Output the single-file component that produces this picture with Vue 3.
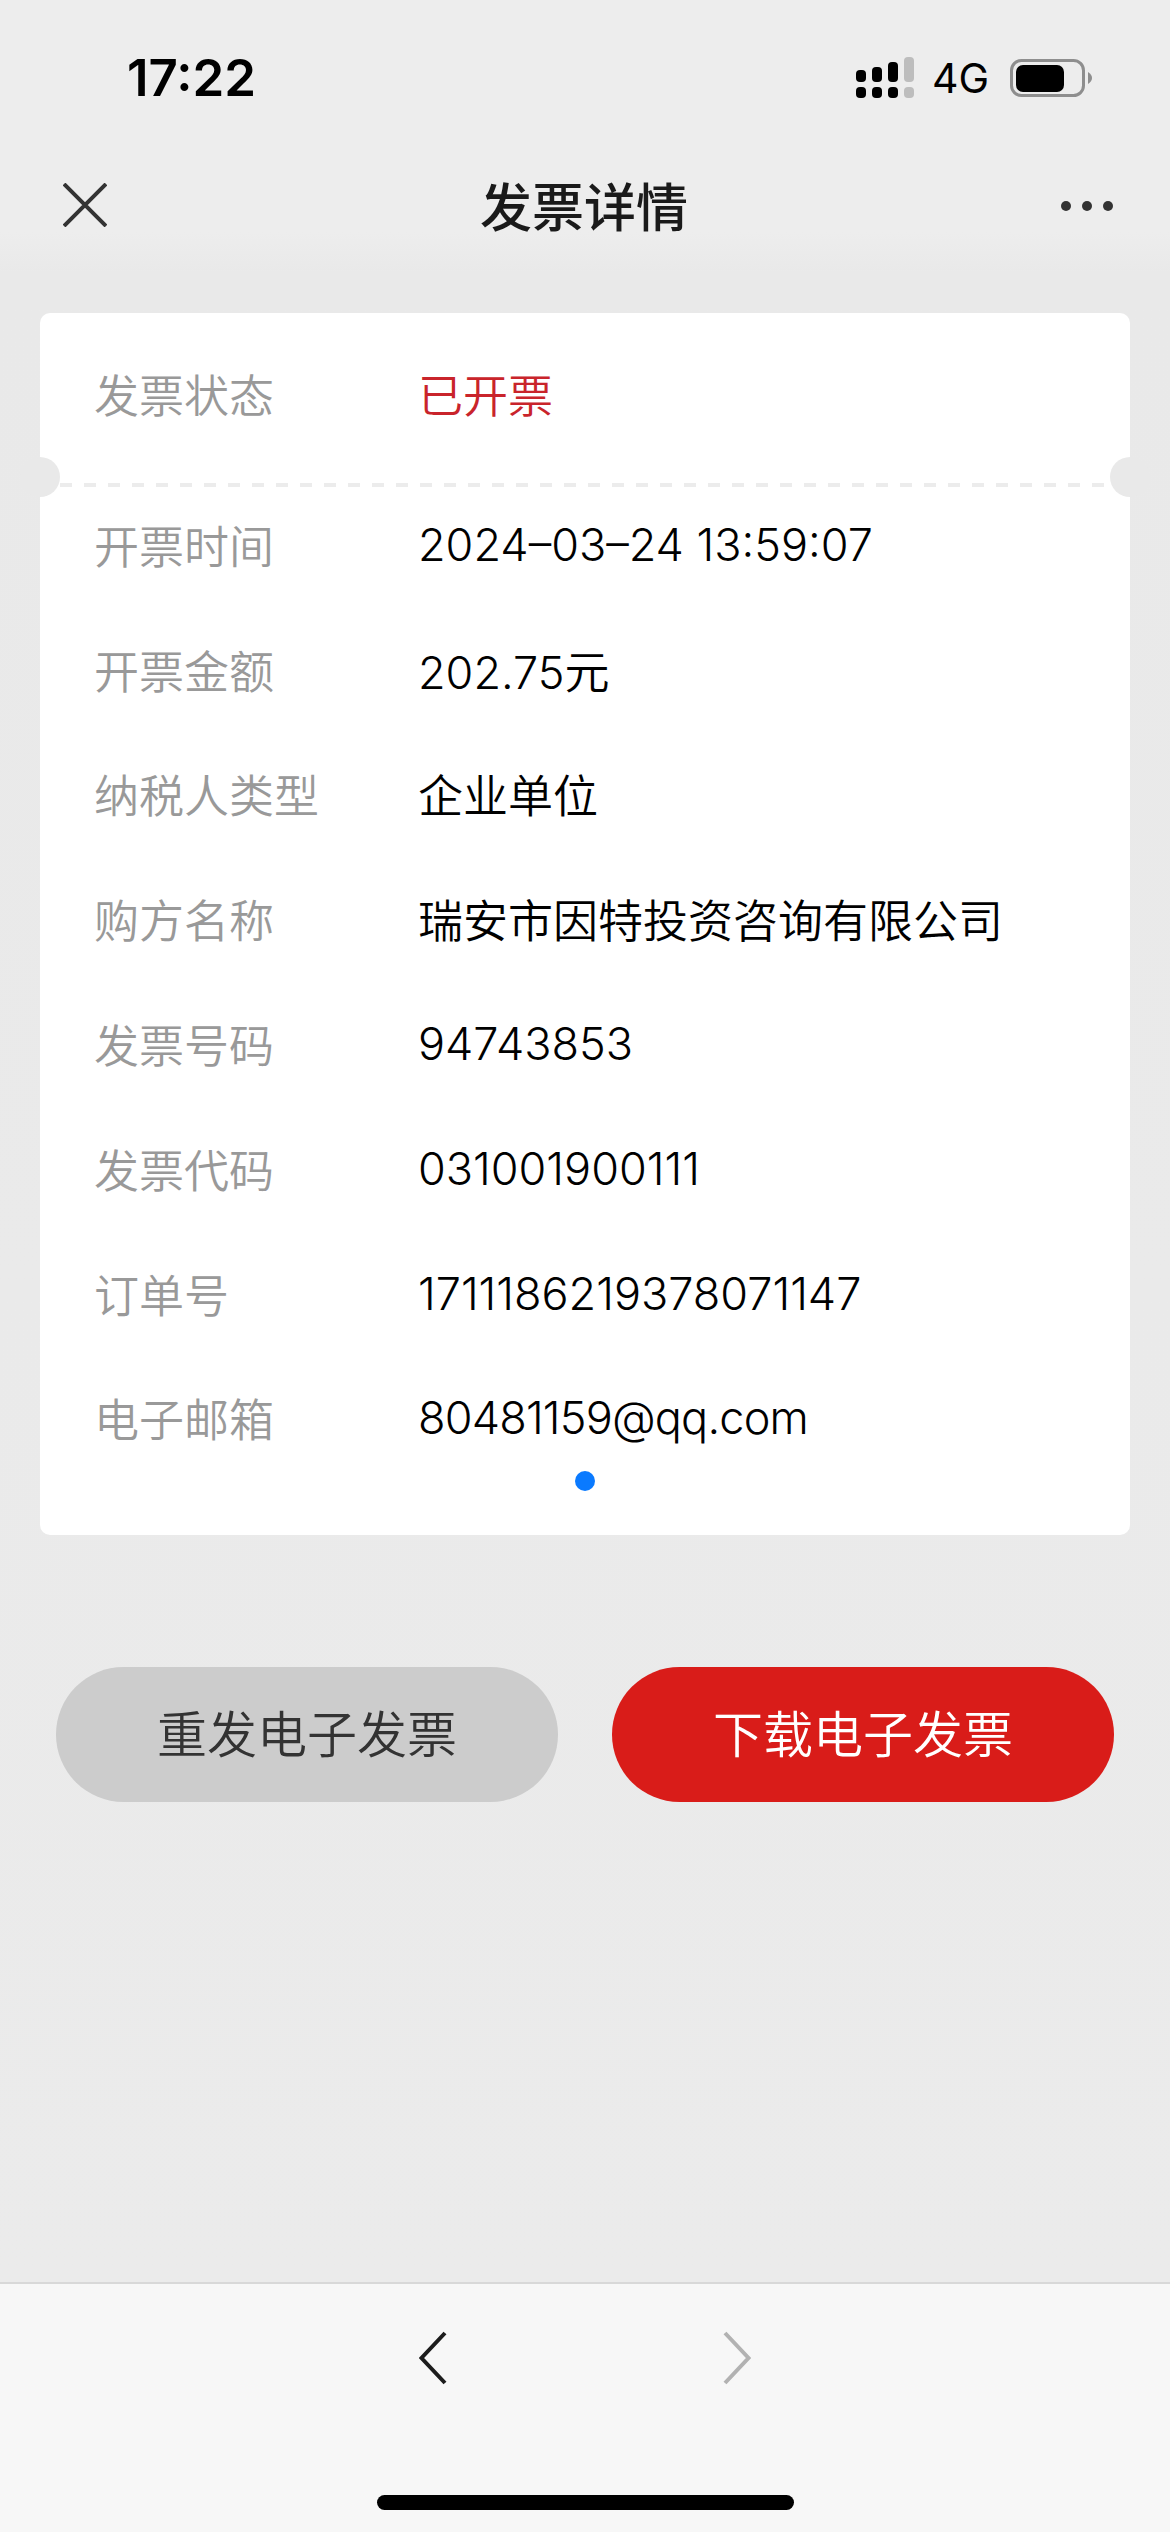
<script setup>
const rows = [
  { label: '开票时间', value: '2024–03–24 13:59:07' },
  { label: '开票金额', value: '202.75元' },
  { label: '纳税人类型', value: '企业单位' },
  { label: '购方名称', value: '瑞安市因特投资咨询有限公司' },
  { label: '发票号码', value: '94743853' },
  { label: '发票代码', value: '031001900111' },
  { label: '订单号', value: '1711186219378071147' },
  { label: '电子邮箱', value: '80481159@qq.com', tight: true }
];
</script>

<template>
  <div class="page">
    <header class="top">
      <div class="status">
        <span class="time">17:22</span>
        <div class="status-right">
          <svg class="signal" width="58" height="41" viewBox="0 0 58 41">
            <rect x="0" y="13" width="10" height="12" rx="4" fill="#000" />
            <rect x="16" y="10" width="10" height="15" rx="4" fill="#000" />
            <rect x="32" y="5" width="10" height="20" rx="4" fill="#000" />
            <rect x="48" y="0" width="10" height="25" rx="4" fill="#bdbdbd" />
            <rect x="0" y="30" width="10" height="11" rx="4" fill="#000" />
            <rect x="16" y="30" width="10" height="11" rx="4" fill="#000" />
            <rect x="32" y="30" width="10" height="11" rx="4" fill="#000" />
            <rect x="48" y="30" width="10" height="11" rx="4" fill="#bdbdbd" />
          </svg>
          <span class="net">4G</span>
          <svg class="battery" width="82" height="38" viewBox="0 0 82 38">
            <rect x="1.5" y="1.5" width="72" height="35" rx="10" fill="none" stroke="#8e8e8e" stroke-width="3" />
            <rect x="6" y="6" width="48" height="27" rx="7" fill="#000" />
            <path d="M78 13 C81 15 82 17 82 19 C82 21 81 23 78 25 Z" fill="#8e8e8e" />
          </svg>
        </div>
      </div>
      <nav class="nav">
        <svg class="close" width="44" height="44" viewBox="0 0 44 44">
          <path d="M1 1 L43 43 M43 1 L1 43" stroke="#333" stroke-width="4" fill="none" />
        </svg>
        <h1 class="title">发票详情</h1>
        <div class="more">
          <i></i><i></i><i></i>
        </div>
      </nav>
    </header>

    <main class="card">
      <div class="head-row">
        <span class="label">发票状态</span>
        <span class="value red">已开票</span>
      </div>
      <div class="divider">
        <i class="notch left"></i>
        <i class="notch right"></i>
      </div>
      <div class="rows">
        <div v-for="row in rows" :key="row.label" class="row">
          <span class="label">{{ row.label }}</span>
          <span class="value" :class="{ tight: row.tight }">{{ row.value }}</span>
        </div>
      </div>
      <div class="pager"></div>
    </main>

    <div class="actions">
      <button class="btn grey">重发电子发票</button>
      <button class="btn primary">下载电子发票</button>
    </div>

    <footer class="bottom">
      <div class="arrows">
        <svg width="28" height="54" viewBox="0 0 28 54">
          <path d="M26 2 L2.5 27 L26 52" stroke="#1c1c1c" stroke-width="4" fill="none" />
        </svg>
        <svg width="28" height="54" viewBox="0 0 28 54">
          <path d="M2 2 L25.5 27 L2 52" stroke="#b2b2b2" stroke-width="4" fill="none" />
        </svg>
      </div>
      <div class="home"></div>
    </footer>
  </div>
</template>

<style scoped>
.page {
  width: 1170px;
  height: 2532px;
  display: flex;
  flex-direction: column;
  background: linear-gradient(#e9e9e9 300px, #ebebeb 2280px);
  font-family: Inter, "Noto Sans CJK SC", sans-serif;
  overflow: hidden;
}

.top {
  height: 273px;
  flex-shrink: 0;
  background: linear-gradient(#ededed 85%, #e9e9e9);
}

.status {
  height: 155px;
  padding: 0 78px 0 127px;
  display: flex;
  align-items: center;
  justify-content: space-between;
  box-sizing: border-box;
}

.time {
  font-size: 51px;
  font-weight: 600;
  color: #000;
}

.status-right {
  display: flex;
  align-items: center;
  gap: 18px;
}

.net {
  font-size: 41px;
  color: #000;
}

.battery {
  margin-left: 3px;
}

.nav {
  display: flex;
  align-items: center;
  justify-content: space-between;
  padding: 0 57px 0 63px;
  height: 100px;
}

.title {
  margin: 0 0 2px;
  font-size: 52px;
  font-weight: 500;
  color: #1a1a1a;
}

.more {
  display: flex;
  gap: 11px;
  margin-top: 2px;
}

.more i {
  width: 10px;
  height: 10px;
  border-radius: 50%;
  background: #333;
}

.card {
  margin: 40px 40px 0;
  height: 1222px;
  background: #fff;
  border-radius: 10px;
  display: flex;
  flex-direction: column;
}

.head-row {
  height: 170px;
  box-sizing: border-box;
  padding: 0 0 10px 54px;
  display: flex;
  align-items: center;
}

.divider {
  position: relative;
  height: 4px;
  margin: 0 20px;
  background: repeating-linear-gradient(90deg, #ececec 0 12px, transparent 12px 24px);
}

.notch {
  position: absolute;
  top: -26px;
  width: 40px;
  height: 40px;
  border-radius: 50%;
  background: #e9e9e9;
}

.notch.left {
  left: -40px;
}

.notch.right {
  right: -40px;
}

.rows {
  padding: 0 54px;
}

.row {
  height: 124.8px;
  box-sizing: border-box;
  padding-bottom: 10px;
  display: flex;
  align-items: center;
}

.label {
  width: 324px;
  flex-shrink: 0;
  font-size: 45px;
  font-weight: 350;
  color: #999;
}

.value {
  font-size: 45px;
  font-weight: 340;
  color: #000;
}

.value.tight {
  letter-spacing: -0.8px;
}

.value.red {
  color: #c9242b;
}

.pager {
  width: 20px;
  height: 20px;
  margin: -14px auto 0;
  border-radius: 50%;
  background: #0a7aff;
}

.actions {
  margin-top: 132px;
  padding: 0 56px;
  display: flex;
  gap: 54px;
}

.btn {
  flex: 1;
  height: 135px;
  padding: 0 0 8px;
  border: none;
  border-radius: 68px;
  font-family: inherit;
  font-size: 50px;
  font-weight: 350;
}

.btn.grey {
  background: #cccccc;
  color: #333;
}

.btn.primary {
  background: #d91c19;
  color: #fff;
}

.bottom {
  margin-top: auto;
  height: 250px;
  box-sizing: border-box;
  background: #f7f7f7;
  border-top: 2px solid #d8d8d8;
  display: flex;
  flex-direction: column;
  align-items: center;
}

.arrows {
  margin-top: 47px;
  display: flex;
  gap: 276px;
}

.home {
  margin-top: 110px;
  width: 417px;
  height: 15px;
  border-radius: 8px;
  background: #000;
}
</style>
